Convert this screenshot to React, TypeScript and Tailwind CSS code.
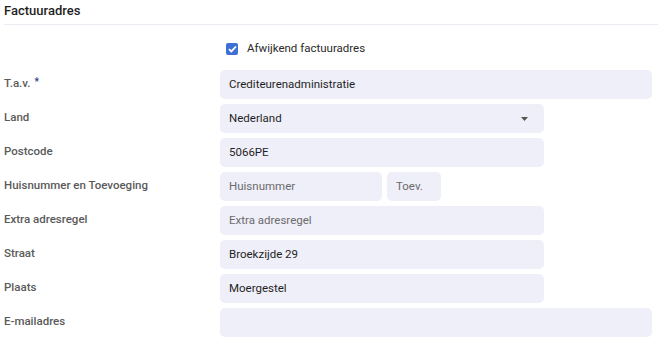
import { useState } from "react";

const font = { fontFamily: "Roboto, 'Noto Sans', sans-serif" };

type Row = {
  label: string;
  required?: boolean;
  value?: string;
  placeholder?: string;
  width: "full" | "mid";
  select?: boolean;
};

const rows: Row[] = [
  { label: "T.a.v.", required: true, value: "Crediteurenadministratie", width: "full" },
  { label: "Land", value: "Nederland", width: "mid", select: true },
  { label: "Postcode", value: "5066PE", width: "mid" },
  { label: "Extra adresregel", placeholder: "Extra adresregel", width: "mid" },
  { label: "Straat", value: "Broekzijde 29", width: "mid" },
  { label: "Plaats", value: "Moergestel", width: "mid" },
  { label: "E-mailadres", value: "", width: "full" },
];

function Field({ row }: { row: Row }) {
  return (
    <div
      className={`h-[29px] rounded-[5px] bg-[#efeff9] flex items-center pl-[9px] pr-[16px] text-[11.5px] ${
        row.width === "full" ? "w-[432px]" : "w-[324px]"
      }`}
    >
      <input
        defaultValue={row.value}
        placeholder={row.placeholder}
        className="flex-1 bg-transparent outline-none text-[#1f1f1f] placeholder-[#6b6b6b]"
      />
      {row.select && (
        <svg width="7" height="4" viewBox="0 0 7 4">
          <path d="M0 0h7L3.5 4z" fill="#555" />
        </svg>
      )}
    </div>
  );
}

function Label({ text, required }: { text: string; required?: boolean }) {
  return (
    <div className="w-[216px] shrink-0 text-[11.5px] font-medium text-[#5a5a5a] pb-[1px]">
      {text}
      {required && (
        <span className="ml-[4px] text-[10px] relative top-[-2px] text-[#1d3a8a]">*</span>
      )}
    </div>
  );
}

export default function App() {
  const [checked, setChecked] = useState(true);

  return (
    <div style={font} className="w-[658px] h-[343px] bg-white overflow-hidden">
      {/* Header */}
      <div className="pl-[4px] pt-[1px] h-[24px] text-[13px] font-medium text-[#1f1f1f]">
        Factuuradres
      </div>
      <div className="ml-[4px] h-px bg-[#ebebf3]" />

      <div className="pl-[4px] pt-[18px]">
        {/* Checkbox */}
        <div className="flex items-center ml-[222px] h-[12px] gap-[9px]">
          <button
            onClick={() => setChecked(!checked)}
            className={`w-[12px] h-[12px] rounded-[2px] flex items-center justify-center ${
              checked ? "bg-[#3d6fd6]" : "border border-[#888] bg-white"
            }`}
          >
            {checked && (
              <svg width="9" height="8" viewBox="0 0 9 8">
                <path d="M1 4.2l2.3 2.2L8 1.5" stroke="#fff" strokeWidth="1.8" fill="none" />
              </svg>
            )}
          </button>
          <span className="text-[11.5px] text-[#2a2a2a]">Afwijkend factuuradres</span>
        </div>

        {/* Form rows */}
        <div className="mt-[15px] flex flex-col gap-[5px]">
          {rows.slice(0, 3).map((r) => (
            <div key={r.label} className="flex items-center">
              <Label text={r.label} required={r.required} />
              <Field row={r} />
            </div>
          ))}

          <div className="flex items-center">
            <Label text="Huisnummer en Toevoeging" />
            <div className="flex gap-[5px]">
              <div className="h-[29px] w-[162px] rounded-[5px] bg-[#efeff9] flex items-center pl-[9px] text-[11.5px]">
                <input placeholder="Huisnummer" className="w-full bg-transparent outline-none placeholder-[#6b6b6b]" />
              </div>
              <div className="h-[29px] w-[54px] rounded-[5px] bg-[#efeff9] flex items-center pl-[9px] text-[11.5px]">
                <input placeholder="Toev." className="w-full bg-transparent outline-none placeholder-[#6b6b6b]" />
              </div>
            </div>
          </div>

          {rows.slice(3).map((r) => (
            <div key={r.label} className="flex items-center">
              <Label text={r.label} required={r.required} />
              <Field row={r} />
            </div>
          ))}
        </div>
      </div>
    </div>
  );
}
